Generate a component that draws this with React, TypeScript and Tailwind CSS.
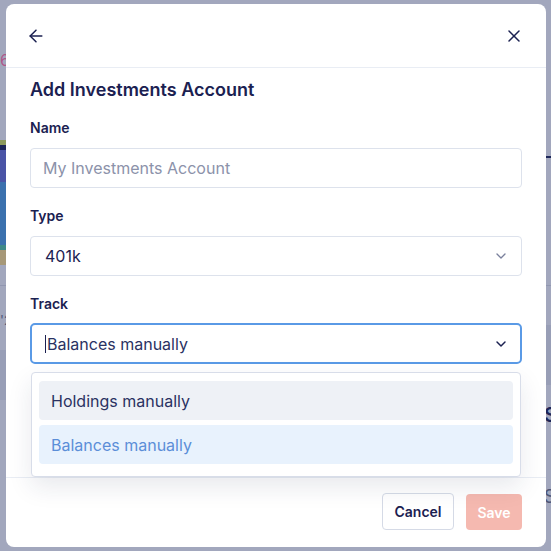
import { ArrowLeft, ChevronDown, X } from "lucide-react";

const bars = [
  ["top-[140px] h-[5px] bg-[#8d9a5c]"],
  ["top-[145px] h-[5px] bg-[#1d2658]"],
  ["top-[150px] h-[32px] bg-[#4a54a6]"],
  ["top-[182px] h-[63px] bg-[#3b71ae]"],
  ["top-[245px] h-[5px] bg-[#3f8a88]"],
  ["top-[250px] h-[15px] bg-[#a69878]"],
];

function Field({ label, children }: { label: string; children: React.ReactNode }) {
  return (
    <div>
      <div className="text-[14px] leading-[20px] font-semibold text-[#1b2151]">{label}</div>
      {children}
    </div>
  );
}

export default function App() {
  return (
    <div
      className="relative h-[551px] w-[551px] overflow-hidden bg-[#a2a7bd]"
      style={{ fontFamily: "Inter, 'Noto Sans', sans-serif" }}
    >
      {/* page behind the overlay */}
      {bars.map(([c]) => (
        <div key={c} className={`absolute left-0 w-[8px] ${c}`} />
      ))}
      <div className="absolute left-0 top-[52px] text-[16px] leading-[16px] text-[#b0588a]">6</div>
      <div className="absolute left-0 top-[313px] text-[13px] leading-[14px] text-[#4d5677]">'2</div>
      <div className="absolute left-0 top-[285px] h-px w-[8px] bg-[#9197b0]" />
      <div className="absolute left-0 top-[350px] h-[50px] w-[8px] bg-[#989eb6]" />
      <div className="absolute right-0 top-[156px] h-[2px] w-[8px] bg-[#1d2658]" />
      <div className="absolute right-0 top-[285px] h-px w-[8px] bg-[#9197b0]" />
      <div className="absolute right-0 top-[325px] h-[60px] w-[8px] bg-[#989eb6]" />
      <div className="absolute left-[544px] top-[405px] text-[20px] font-semibold leading-[20px] text-[#1d2658]">S</div>
      <div className="absolute left-[544px] top-[488px] text-[18px] leading-[18px] text-[#4d5677]">S</div>

      {/* dialog */}
      <div className="absolute left-[6px] top-[4px] flex h-[543px] w-[540px] flex-col rounded-[8px] bg-white">
        <div className="flex h-[64px] shrink-0 items-center justify-between border-b border-[#e9edf4] pl-[20px] pr-[22px] text-[#1b2151]">
          <ArrowLeft size={20} strokeWidth={1.8} />
          <X size={20} strokeWidth={1.8} />
        </div>

        <div className="relative flex-1 px-[24px]">
          <h2 className="mt-[8px] text-[18px] leading-[28px] font-semibold text-[#1b2151]">
            Add Investments Account
          </h2>

          <div className="mt-[14px] flex flex-col gap-[18px]">
            <Field label="Name">
              <div className="mt-[10px] flex h-[40px] items-center rounded-[4px] border border-[#dde2ec] px-[12px] text-[16px] text-[#8c92aa]">
                My Investments Account
              </div>
            </Field>
            <Field label="Type">
              <div className="mt-[10px] flex h-[40px] items-center justify-between rounded-[4px] border border-[#dde2ec] pl-[14px] pr-[12px] text-[16px] text-[#1b2151]">
                401k
                <ChevronDown size={16} className="text-[#7a809c]" />
              </div>
            </Field>
            <Field label="Track">
              <div className="mt-[9px] flex h-[41px] items-center justify-between rounded-[5px] border-2 border-[#5a9ae6] pl-[13px] pr-[11px] text-[16px] text-[#2a3262]">
                <span className="flex items-center">
                  <span className="mr-px h-[18px] w-px bg-[#1b2151]" />
                  Balances manually
                </span>
                <ChevronDown size={16} strokeWidth={2.2} className="text-[#1b2151]" />
              </div>
            </Field>
          </div>

          <div className="absolute left-[25px] right-[25px] top-[304px] z-10 flex flex-col gap-[5px] rounded-[4px] border border-[#d8dde9] bg-white px-[7px] pb-[12px] pt-[8px] shadow-[0_10px_24px_rgba(30,40,80,0.10)]">
            <div className="flex h-[39px] items-center rounded-[4px] bg-[#eef1f6] px-[12px] text-[16px] text-[#2a3262]">
              Holdings manually
            </div>
            <div className="flex h-[39px] items-center rounded-[4px] bg-[#e8f2fd] px-[12px] text-[16px] text-[#5b8ed8]">
              Balances manually
            </div>
          </div>
        </div>

        <div className="flex h-[70px] shrink-0 items-start justify-end gap-[12px] border-t border-[#e9edf4] pr-[24px] pt-[15px]">
          <button className="h-[37px] w-[72px] rounded-[4px] border border-[#d5dae6] bg-white text-[14px] font-semibold text-[#1b2151]">
            Cancel
          </button>
          <button className="mt-px h-[36px] w-[56px] rounded-[4px] bg-[#f5b9b0] text-[14px] font-semibold text-white">
            Save
          </button>
        </div>
      </div>
    </div>
  );
}
